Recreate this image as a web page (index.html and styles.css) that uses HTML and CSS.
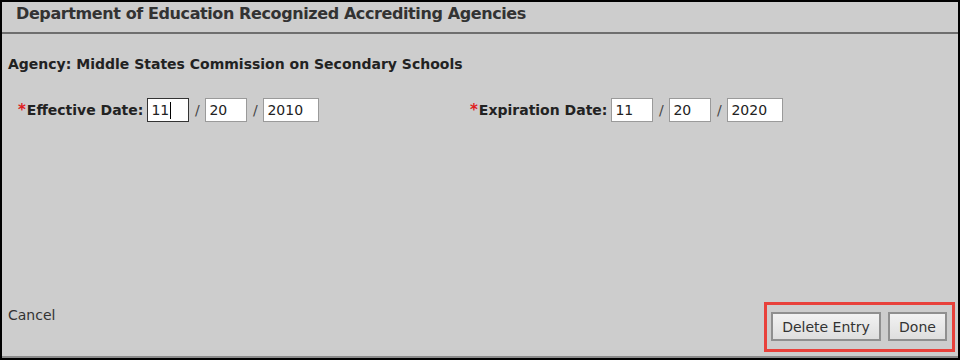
FILE: index.html
```html
<!DOCTYPE html>
<html>
<head>
<meta charset="utf-8">
<link rel="stylesheet" href="styles.css">
</head>
<body>
<div class="frame">
  <div class="header">Department of Education Recognized Accrediting Agencies</div>
  <div class="content">
    <div class="agency">Agency: Middle States Commission on Secondary Schools</div>
    <div class="dates">
      <div class="field">
        <span class="req">*</span><span class="label">Effective Date:</span>
        <span class="box focus w2">11<span class="caret"></span></span>
        <span class="sep">/</span>
        <span class="box w2">20</span>
        <span class="sep">/</span>
        <span class="box w4">2010</span>
      </div>
      <div class="field">
        <span class="req">*</span><span class="label">Expiration Date:</span>
        <span class="box w2">11</span>
        <span class="sep">/</span>
        <span class="box w2">20</span>
        <span class="sep">/</span>
        <span class="box w4">2020</span>
      </div>
    </div>
  </div>
  <div class="footer">
    <span class="cancel">Cancel</span>
    <div class="highlight">
      <button class="btn delete">Delete Entry</button>
      <button class="btn done">Done</button>
    </div>
  </div>
</div>
</body>
</html>
```
FILE: styles.css
```css
html, body {
  margin: 0;
  padding: 0;
}
body {
  font-family: "DejaVu Sans", Verdana, sans-serif;
  color: #333333;
}
.frame {
  width: 960px;
  height: 360px;
  box-sizing: border-box;
  border: 2px solid #000;
  background: #cdcdcd;
  display: flex;
  flex-direction: column;
}
.header {
  height: 32px;
  box-sizing: border-box;
  padding-left: 14px;
  padding-top: 2px;
  font-size: 16px;
  letter-spacing: -0.4px;
  font-weight: bold;
  color: #333;
  border-bottom: 2px solid #6e6e6e;
}
.content {
  flex: 1;
  padding-left: 6px;
}
.agency {
  margin-top: 22px;
  font-size: 14px;
  font-weight: bold;
  color: #222;
}
.dates {
  display: grid;
  grid-template-columns: 452px auto;
  padding-left: 10px;
  margin-top: 26px;
}
.field {
  display: flex;
  align-items: center;
  font-size: 14px;
}
.req {
  color: #e02020;
  font-weight: bold;
  font-size: 15px;
  margin-right: 1px;
}
.label {
  font-weight: bold;
  color: #222;
  margin-right: 4px;
}
.box {
  display: inline-flex;
  align-items: center;
  box-sizing: border-box;
  height: 24px;
  background: #fff;
  border: 1px solid #9a9a9a;
  padding-left: 3px;
  font-size: 14px;
  color: #222;
}
.box.w2 { width: 42px; }
.box.w4 { width: 56px; }
.box.focus { border-color: #333; }
.caret {
  display: inline-block;
  width: 1px;
  height: 17px;
  background: #000;
  margin-left: 1px;
}
.sep {
  width: 16px;
  text-align: center;
  color: #444;
}
.footer {
  display: flex;
  justify-content: space-between;
  align-items: flex-end;
  padding: 0 3px 4px 6px;
  border-bottom: 2px solid #8a8a8a;
}
.cancel {
  font-size: 14px;
  color: #333;
  margin-bottom: 29px;
}
.highlight {
  display: flex;
  gap: 7px;
  border: 3px solid #e8413b;
  padding: 7px 5px 8px 4px;
}
.btn {
  font-family: "DejaVu Sans", Verdana, sans-serif;
  font-size: 14px;
  color: #333;
  height: 29px;
  border: 2px solid #8f8f8f;
  background: linear-gradient(#f2f2f2, #dedede);
  padding: 0;
}
.btn.delete { width: 110px; }
.btn.done { width: 59px; }
```
